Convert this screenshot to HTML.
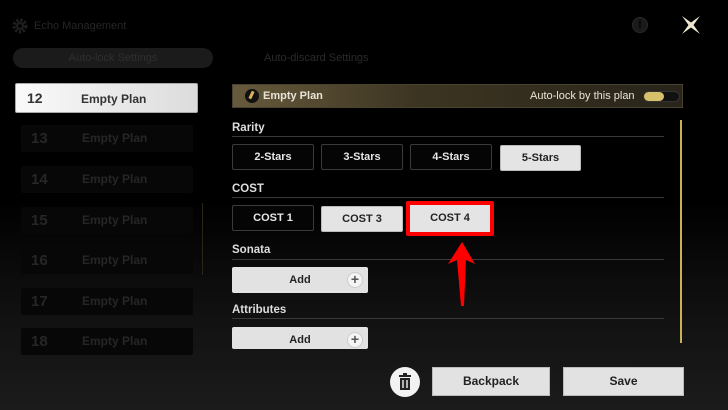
<!DOCTYPE html>
<html><head><meta charset="utf-8"><style>
*{margin:0;padding:0;box-sizing:border-box}
body{width:728px;height:410px;overflow:hidden;font-family:"Liberation Sans",sans-serif;background:linear-gradient(#000 0,#000 200px,#131313 330px,#1b1b1b 410px);position:relative}
.a{position:absolute}
.row{position:absolute;left:21px;width:172px;height:27px;background:#070707;border-radius:2px}
.row .n{position:absolute;left:10px;top:5px;font-size:15px;color:#262626;font-weight:bold}
.row .t{position:absolute;left:61px;top:6px;font-size:12px;color:#262626;font-weight:bold}
.btn{position:absolute;height:26px;border:1px solid #3a3a3a;border-radius:2px;color:#e6e6e6;font-size:11px;font-weight:bold;text-align:center;line-height:24px;background:#050505}
.btn.l{background:#e4e4e4;color:#222;border-color:#bbb}
.lbl{position:absolute;left:232px;font-size:11.5px;color:#ddd;font-weight:bold}
.ln{position:absolute;left:232px;width:432px;height:1px;background:#3a3a3a}
.add{position:absolute;left:232px;width:136px;height:26px;background:#e2e2e2;border-radius:2px;font-size:11px;font-weight:bold;color:#222;text-align:center;line-height:26px}
.add i{position:absolute;right:5px;top:5px;width:16px;height:16px;border-radius:50%;background:#f4f4f4;border:1px solid #ccc;font-style:normal;line-height:13px;font-size:14px;color:#555}
</style></head><body>
<svg class="a" style="left:12px;top:18px" width="16" height="16" viewBox="0 0 16 16"><circle cx="8" cy="8" r="5.5" fill="none" stroke="#1e1e1e" stroke-width="4" stroke-dasharray="2.2 1.5"/><circle cx="8" cy="8" r="4" fill="#1e1e1e"/><circle cx="8" cy="8" r="1.8" fill="#000"/></svg>
<div class="a" style="left:34px;top:20px;font-size:11px;color:#262626">Echo Management</div>
<div class="a" style="left:13px;top:48px;width:200px;height:20px;border-radius:10px;background:#1b1b1b;color:#2f2f2f;font-size:11px;text-align:center;line-height:20px">Auto-lock Settings</div>
<div class="a" style="left:264px;top:52px;color:#2a2a2a;font-size:11px">Auto-discard Settings</div>
<div class="a" style="left:632px;top:17px;width:16px;height:16px;border-radius:50%;background:#1a1a1a;border:1px solid #2a2a2a;color:#000;font-size:11px;text-align:center;line-height:14px;font-weight:bold">!</div>
<svg class="a" style="left:680px;top:14px" width="22" height="22" viewBox="0 0 22 22"><path d="M2 2 L11 8.5 L20 2 L13.5 11 L20 20 L11 13.5 L2 20 L8.5 11Z" fill="#ede6cf"/></svg>
<div class="a" style="left:15px;top:83px;width:183px;height:30px;background:linear-gradient(90deg,#fafafa,#dcdcdc);border-radius:2px;border:1px solid #aaa"></div>
<div class="a" style="left:27px;top:90px;font-size:14px;color:#333;font-weight:bold">12</div>
<div class="a" style="left:81px;top:92px;font-size:12px;color:#333;font-weight:bold">Empty Plan</div>
<div class="row" style="top:125px"><span class="n">13</span><span class="t">Empty Plan</span></div>
<div class="row" style="top:166px"><span class="n">14</span><span class="t">Empty Plan</span></div>
<div class="row" style="top:207px"><span class="n">15</span><span class="t">Empty Plan</span></div>
<div class="row" style="top:247px"><span class="n">16</span><span class="t">Empty Plan</span></div>
<div class="row" style="top:288px"><span class="n">17</span><span class="t">Empty Plan</span></div>
<div class="row" style="top:328px"><span class="n">18</span><span class="t">Empty Plan</span></div>
<div class="a" style="left:202px;top:203px;width:1px;height:72px;background:#2a2515"></div>
<div class="a" style="left:232px;top:84px;width:451px;height:24px;background:linear-gradient(90deg,#675a3c,#3d3522 40%,#28241a);border:1px solid #4a4230"></div>
<div class="a" style="left:245px;top:89px;width:14px;height:14px;border-radius:50%;background:#111"></div>
<div class="a" style="left:250px;top:91px;width:3px;height:8px;background:#d9b55a;transform:rotate(25deg)"></div>
<div class="a" style="left:263px;top:90px;font-size:11px;color:#e8e4d8;font-weight:bold">Empty Plan</div>
<div class="a" style="left:530px;top:90px;font-size:11px;color:#e8e4d8">Auto-lock by this plan</div>
<div class="a" style="left:643px;top:91px;width:37px;height:11px;border-radius:6px;background:#111;border:1px solid #333"></div>
<div class="a" style="left:644px;top:92px;width:20px;height:9px;border-radius:5px;background:#d7c06a"></div>
<div class="lbl" style="top:122px">Rarity</div><div class="ln" style="top:136px"></div>
<div class="btn" style="left:232px;top:144px;width:82px">2-Stars</div>
<div class="btn" style="left:321px;top:144px;width:82px">3-Stars</div>
<div class="btn" style="left:410px;top:144px;width:82px">4-Stars</div>
<div class="btn l" style="left:500px;top:145px;width:81px">5-Stars</div>
<div class="lbl" style="top:183px">COST</div><div class="ln" style="top:197px"></div>
<div class="btn" style="left:232px;top:205px;width:82px">COST 1</div>
<div class="btn l" style="left:321px;top:206px;width:82px">COST 3</div>
<div class="a" style="left:406px;top:201px;width:88px;height:35px;border:4px solid #f00;border-radius:2px;background:#e4e4e4;font-size:11px;font-weight:bold;color:#222;text-align:center;line-height:27px">COST 4</div>
<div class="lbl" style="top:244px">Sonata</div><div class="ln" style="top:259px"></div>
<div class="add" style="top:267px">Add<i>+</i></div>
<div class="lbl" style="top:304px">Attributes</div><div class="ln" style="top:318px"></div>
<div class="add" style="top:327px;height:22px;line-height:26px;overflow:hidden">Add<i>+</i></div>
<svg class="a" style="left:445px;top:240px" width="32" height="70" viewBox="0 0 32 70"><path d="M17 2 L30 24 L21 20 L19 66 L16 66 L12 20 L3 24Z" fill="#f00"/></svg>
<div class="a" style="left:680px;top:120px;width:2px;height:223px;background:#c9b15a"></div>
<div class="a" style="left:390px;top:367px;width:30px;height:30px;border-radius:50%;background:#f2f2f2"></div>
<svg class="a" style="left:397px;top:373px" width="16" height="18" viewBox="0 0 16 18"><rect x="2" y="2" width="12" height="2" fill="#222"/><rect x="6" y="0" width="4" height="2" fill="#222"/><rect x="3" y="5" width="10" height="12" fill="#222"/><rect x="5.3" y="7" width="1.4" height="8" fill="#f2f2f2"/><rect x="9.3" y="7" width="1.4" height="8" fill="#f2f2f2"/></svg>
<div class="a" style="left:432px;top:367px;width:118px;height:29px;background:#e2e2e2;border:1px solid #bbb;font-size:12px;font-weight:bold;color:#222;text-align:center;line-height:27px">Backpack</div>
<div class="a" style="left:563px;top:367px;width:121px;height:29px;background:#e2e2e2;border:1px solid #bbb;font-size:12px;font-weight:bold;color:#222;text-align:center;line-height:27px">Save</div>
</body></html>
